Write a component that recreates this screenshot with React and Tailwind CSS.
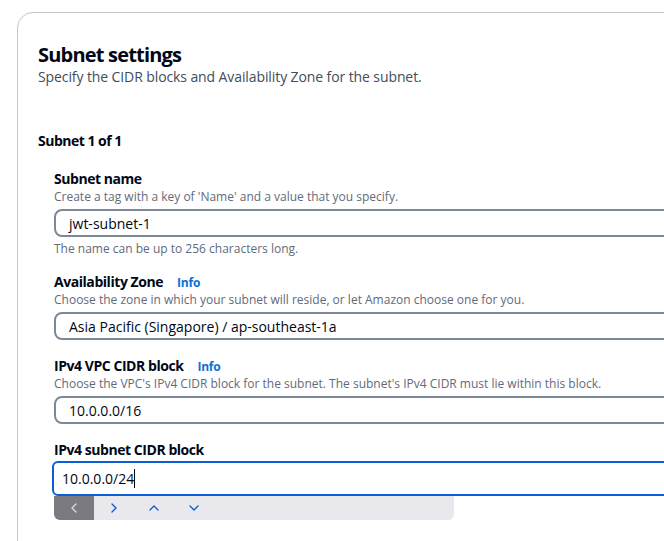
import { ChevronLeft, ChevronRight, ChevronUp, ChevronDown } from "lucide-react";

const font = { fontFamily: '"Open Sans", "Liberation Sans", sans-serif' };

function Label({ children, info }) {
  return (
    <div className="flex items-baseline gap-[14px] h-5 leading-5">
      <span className="text-[14px] font-bold tracking-[-0.45px] text-[#000716]">{children}</span>
      {info && <span className="text-[12px] font-bold tracking-[-0.2px] text-[#0972d3]">Info</span>}
    </div>
  );
}

function Desc({ children }) {
  return <p className="text-[12px] leading-4 text-[#5f6b7a]">{children}</p>;
}

function TextBox({ value }) {
  return (
    <div className="mt-[4px] h-[28px] w-full border-2 border-[#7d8998] rounded-lg flex items-center pl-[13px] text-[14px] text-[#000716]">
      {value}
    </div>
  );
}

export default function App() {
  return (
    <div className="w-[664px] h-[541px] overflow-hidden bg-white pt-3 pl-[17px]" style={font}>
      <div className="w-[720px] h-[600px] border border-[#c6c6cd] rounded-2xl pl-5 pt-[30px]">
        <h2 className="text-[20px] leading-6 font-bold tracking-[-0.8px] text-[#000716]">Subnet settings</h2>
        <p className="text-[14px] leading-5 tracking-[-0.1px] text-[#414d5c]">
          Specify the CIDR blocks and Availability Zone for the subnet.
        </p>

        <h3 className="mt-[44px] text-[14px] leading-5 font-bold tracking-[-0.5px] text-[#000716]">Subnet 1 of 1</h3>

        <div className="pl-4 pt-[18px]">
          <Label>Subnet name</Label>
          <Desc>Create a tag with a key of 'Name' and a value that you specify.</Desc>
          <TextBox value="jwt-subnet-1" />
          <p className="mt-[4px] text-[12px] leading-4 text-[#5f6b7a]">The name can be up to 256 characters long.</p>

          <div className="mt-[15px]">
            <Label info>Availability Zone</Label>
            <Desc>Choose the zone in which your subnet will reside, or let Amazon choose one for you.</Desc>
            <TextBox value="Asia Pacific (Singapore) / ap-southeast-1a" />
          </div>

          <div className="mt-4">
            <Label info>IPv4 VPC CIDR block</Label>
            <Desc>Choose the VPC's IPv4 CIDR block for the subnet. The subnet's IPv4 CIDR must lie within this block.</Desc>
            <TextBox value="10.0.0.0/16" />
          </div>

          <div className="mt-4">
            <Label>IPv4 subnet CIDR block</Label>
            <div className="mt-[1px] -ml-[2px] h-[35px] w-full border-2 border-[#0b5ed7] rounded-md flex items-center pl-[8px] text-[14px] text-[#000716]">
              10.0.0.0/24<span className="w-px h-[19px] bg-black" />
            </div>
            <div className="w-[400px] h-6 bg-[#e8e8ed] rounded-b-md flex items-center">
              <div className="w-[40px] h-full bg-[#7a7a80] rounded-bl-md flex items-center justify-center text-[#d8d8de]">
                <ChevronLeft size={16} strokeWidth={2} />
              </div>
              <div className="w-[40px] flex justify-center text-[#0b5ed7]">
                <ChevronRight size={16} strokeWidth={2} />
              </div>
              <div className="w-[40px] flex justify-center text-[#0b5ed7]">
                <ChevronUp size={16} strokeWidth={2} />
              </div>
              <div className="w-[40px] flex justify-center text-[#0b5ed7]">
                <ChevronDown size={16} strokeWidth={2} />
              </div>
            </div>
          </div>
        </div>
      </div>
    </div>
  );
}
